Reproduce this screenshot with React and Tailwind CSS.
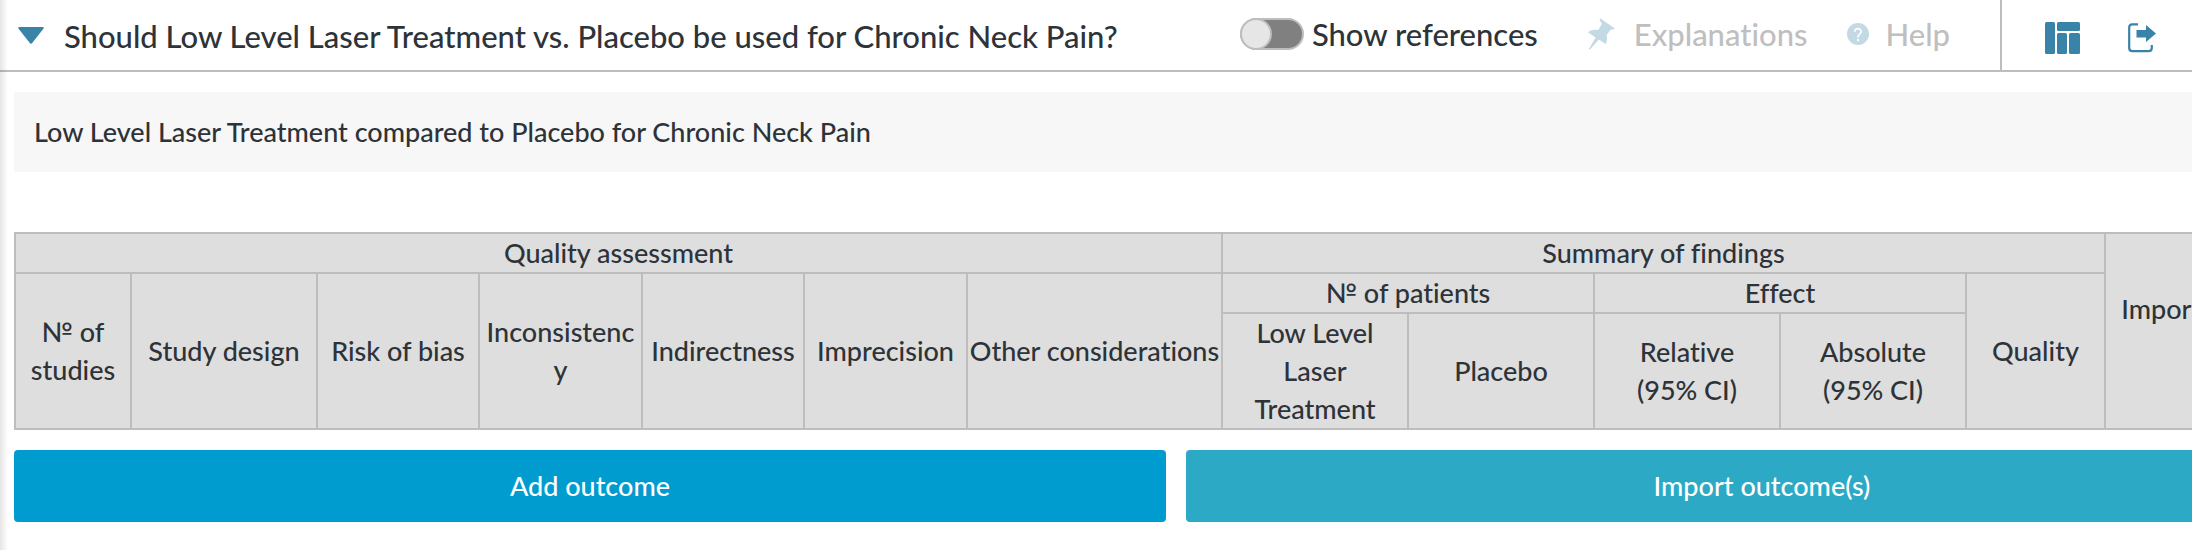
const cell = "border-2 border-[#bdbdbd] p-0 text-center align-middle font-medium";

const columnWidths = [
  "w-[116px]", "w-[186px]", "w-[162px]", "w-[163px]", "w-[162px]", "w-[163px]", "w-[255px]",
  "w-[186px]", "w-[186px]", "w-[186px]", "w-[186px]", "w-[139px]", "w-[168px]",
];

function PinIcon() {
  return (
    <svg className="h-8 w-7 shrink-0" viewBox="0 0 28 32" fill="#c3d9e4" aria-hidden="true">
      <path d="M11.8 0 L26.8 10.4 C25.6 11.6 24 11.8 22.8 11.4 L18.6 17 C19.4 20.4 19.2 23.6 17.6 26 L10.8 21.6 L2 31.6 L0.8 31.2 L7.6 19.4 L0 14.2 C3 12 6.6 11.4 10.4 12 L14 5.6 C12.4 4.2 11.4 2 11.8 0 Z" />
    </svg>
  );
}

function HelpIcon() {
  return (
    <svg className="size-[22px] shrink-0" viewBox="0 0 22 22" fill="none" aria-hidden="true">
      <circle cx="11" cy="11" r="11" fill="#c3d9e4" />
      <path d="M7.8 8.8 C7.8 4.6 14.2 4.6 14.2 8.6 C14.2 11 11 11 11 14.4" stroke="#fff" strokeWidth="1.6" />
      <circle cx="11" cy="17" r="1.2" fill="#fff" />
    </svg>
  );
}

function LayoutIcon() {
  return (
    <svg className="h-8 w-9" viewBox="0 0 36 32" fill="#3983a8" aria-hidden="true">
      <rect x="0" y="0" width="10" height="32" rx="1.5" />
      <rect x="12" y="0" width="23" height="9" rx="1.5" />
      <rect x="12" y="11" width="10" height="21" rx="1.5" />
      <rect x="24" y="11" width="11" height="21" rx="1.5" />
    </svg>
  );
}

function ExportIcon() {
  return (
    <svg className="h-8 w-7" viewBox="0 0 28 32" aria-hidden="true">
      <path d="M10 2.4 H4 Q1.2 2.4 1.2 5.4 V26 Q1.2 29.2 4.5 29.2 H20.5 Q23.8 29.2 23.8 26 V23" fill="none" stroke="#3983a8" strokeWidth="2.2" />
      <path d="M8.5 8 H18 V3 L28 11.6 L18 20 V15.5 H8.5 Z" fill="#3983a8" />
    </svg>
  );
}

export default function App() {
  return (
    <div className="relative min-h-screen overflow-hidden bg-white font-[Lato,'PT_Sans',sans-serif] text-[27px] leading-[38px] font-medium text-[#2d3338] [font-variant-ligatures:no-common-ligatures]">
      <header className="flex h-[72px] items-stretch border-b-2 border-[#bdbdbd] text-[31px] whitespace-nowrap">
        <div className="flex grow items-center gap-5 pl-[18px]">
          <button type="button" aria-label="Collapse question">
            <svg className="h-[17px] w-[26px]" viewBox="0 0 26 17" aria-hidden="true">
              <path d="M1.5 0 H24.5 Q26.6 0 25.4 1.8 L14.4 15.8 Q13 17.6 11.6 15.8 L0.6 1.8 Q-0.6 0 1.5 0 Z" fill="#3983a8" />
            </svg>
          </button>
          <h1 className="pt-0.5">Should Low Level Laser Treatment vs. Placebo be used for Chronic Neck Pain?</h1>
        </div>
        <div className="flex items-center pb-0.5">
          <label className="flex items-center gap-2">
            <input
              type="checkbox"
              className="relative h-8 w-16 appearance-none rounded-full border-2 border-[#bdbdbd] bg-[#808080] before:absolute before:-top-0.5 before:-left-0.5 before:size-8 before:rounded-full before:border-2 before:border-[#bdbdbd] before:bg-[#e6e6e6]"
            />
            Show references
          </label>
          <button type="button" disabled className="ml-[50px] flex items-center gap-[18px] text-[#bfbfbf]">
            <PinIcon />
            Explanations
          </button>
          <button type="button" disabled className="ml-10 flex items-center gap-4 text-[#bfbfbf]">
            <HelpIcon />
            Help
          </button>
        </div>
        <div className="ml-[50px] flex items-center gap-[47px] border-l-2 border-[#bdbdbd] pt-1.5 pr-9 pl-[43px]">
          <button type="button" aria-label="Table layout"><LayoutIcon /></button>
          <button type="button" aria-label="Export"><ExportIcon /></button>
        </div>
      </header>

      <main className="min-w-[2352px] px-3.5 pt-5">
        <p className="bg-[#f7f7f7] px-5 py-[21px]">
          Low Level Laser Treatment compared to Placebo for Chronic Neck Pain
        </p>

        <table className="mt-15 table-fixed border-collapse bg-[#dedede]">
          <colgroup>
            {columnWidths.map((width, i) => <col key={i} className={width} />)}
          </colgroup>
          <thead>
            <tr>
              <th colSpan={7} className={cell}>Quality assessment</th>
              <th colSpan={5} className={cell}>Summary of findings</th>
              <th rowSpan={3} className={`${cell} pb-11`}>Importance</th>
            </tr>
            <tr>
              <th rowSpan={2} className={cell}>№ of studies</th>
              <th rowSpan={2} className={cell}>Study design</th>
              <th rowSpan={2} className={cell}>Risk of bias</th>
              <th rowSpan={2} className={cell}>Inconsistenc<br />y</th>
              <th rowSpan={2} className={cell}>Indirectness</th>
              <th rowSpan={2} className={cell}>Imprecision</th>
              <th rowSpan={2} className={`${cell} whitespace-nowrap`}>Other considerations</th>
              <th colSpan={2} className={cell}>№ of patients</th>
              <th colSpan={2} className={cell}>Effect</th>
              <th rowSpan={2} className={cell}>Quality</th>
            </tr>
            <tr>
              <th className={`${cell} px-4`}>Low Level Laser Treatment</th>
              <th className={cell}>Placebo</th>
              <th className={cell}>Relative<br />(95% CI)</th>
              <th className={cell}>Absolute<br />(95% CI)</th>
            </tr>
          </thead>
        </table>

        <div className="mt-5 grid grid-cols-2 gap-5 text-white">
          <button type="button" className="h-[72px] rounded bg-[#009ccf]">Add outcome</button>
          <button type="button" className="h-[72px] rounded bg-[#2ba9c5]">Import outcome(s)</button>
        </div>
      </main>

      <div className="pointer-events-none absolute inset-y-0 left-0 w-2 bg-linear-to-r from-black/10 to-transparent" />
    </div>
  );
}
